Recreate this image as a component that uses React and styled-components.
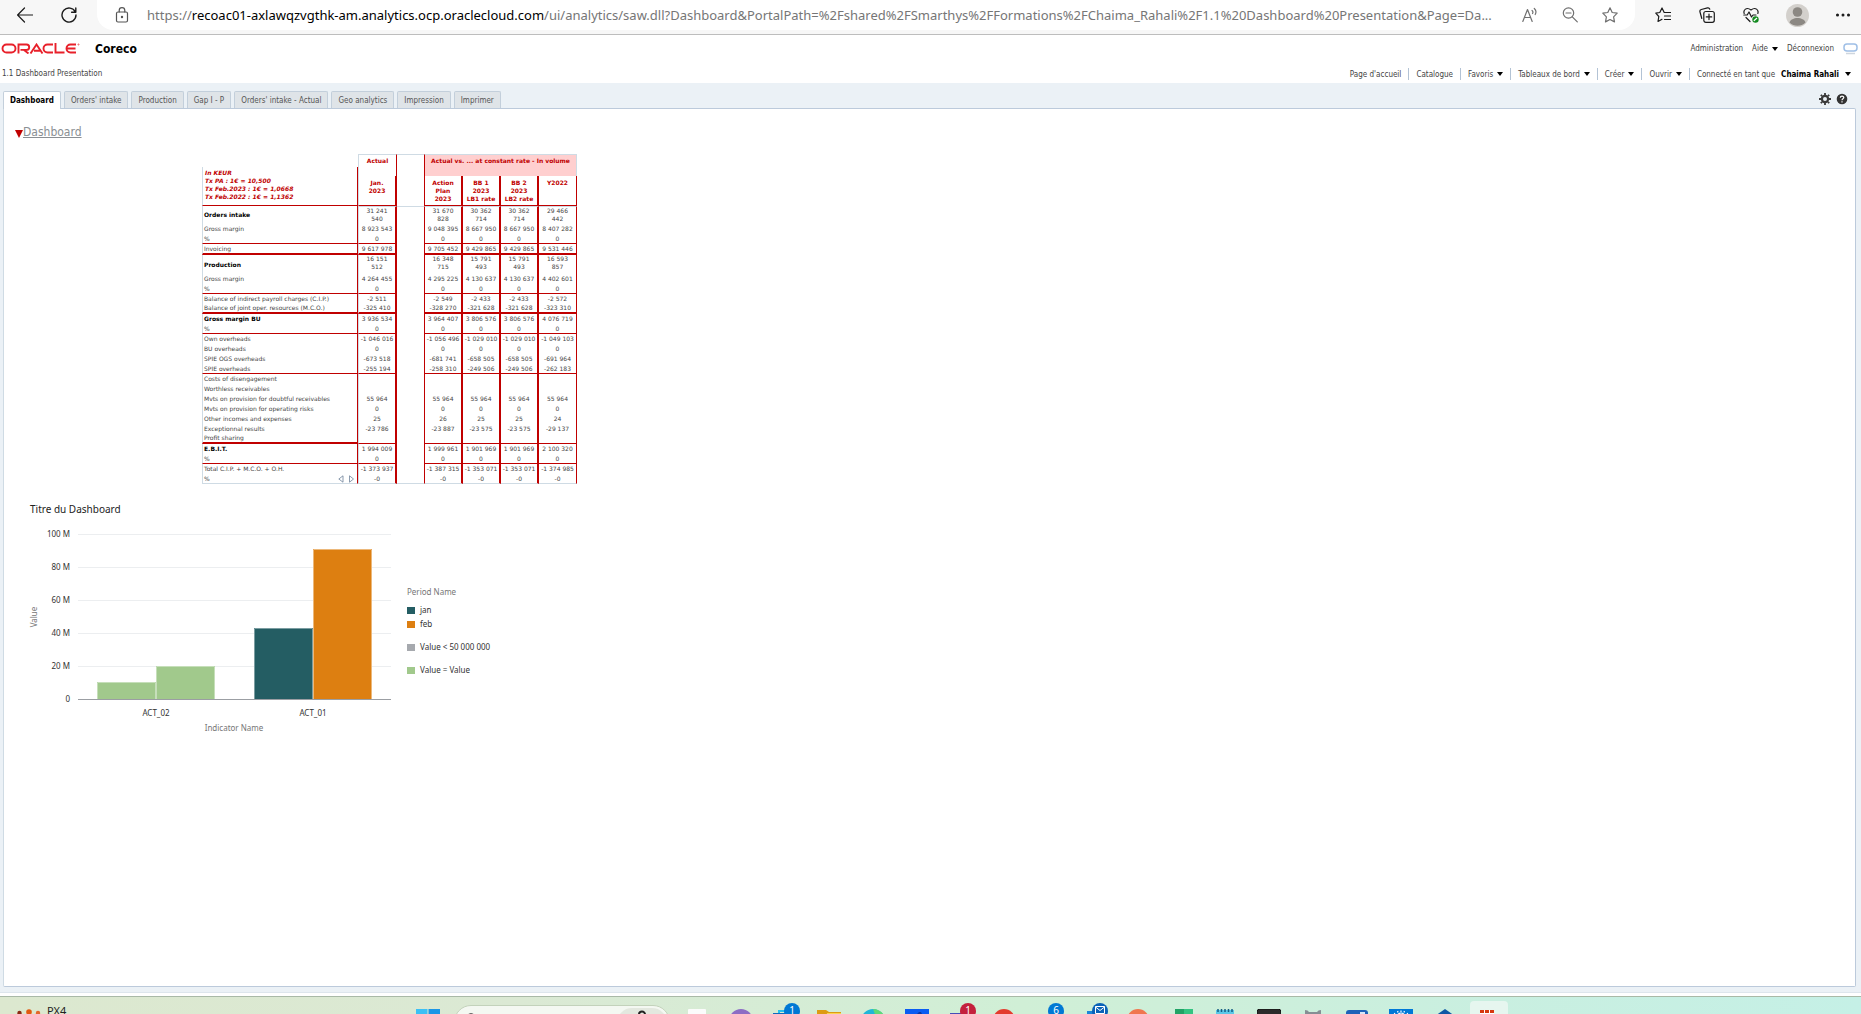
import React from 'react';
import styled, { createGlobalStyle, css } from 'styled-components';

const ui = '"Noto Sans", "Open Sans", sans-serif';
const narrow = '"DejaVu Sans Condensed", "DejaVu Sans", sans-serif';
const wide = '"DejaVu Sans", sans-serif';
const red = '#c00000';
const pale = '#cfdbe4';

const Global = createGlobalStyle`
  *, *::before, *::after { box-sizing: border-box; }
  body { margin: 0; background: #fff; color: #444; font-family: ${narrow}; font-size: 8px; }
  button { border: 0; padding: 0; background: none; color: inherit; font: inherit; cursor: pointer; }
  a { color: inherit; text-decoration: none; }
`;

const Page = styled.div`
  min-height: 100vh;
  display: flex;
  flex-direction: column;
  overflow: hidden;
`;

/* ---------- browser bar ---------- */
const Browser = styled.header`
  height: 35px;
  flex: none;
  display: flex;
  align-items: flex-start;
  background: #f7f7f7;
  border-bottom: 1px solid #bdbdbd;
`;
const IconButton = styled.button`
  width: ${(p) => p.$w || 44}px;
  height: 30px;
  flex: none;
  display: flex;
  align-items: center;
  justify-content: center;
  color: ${(p) => p.$color || '#1b1b1b'};
`;
const Leading = styled.div`
  display: flex;
  padding-left: 3px;
  width: 97px;
`;
const Address = styled.div`
  flex: 1;
  min-width: 0;
  height: 30px;
  display: flex;
  align-items: center;
  margin-right: 10px;
  padding-right: 5px;
  background: #fff;
  border-radius: 0 0 16px 16px;
`;
const Url = styled.div`
  flex: 1;
  min-width: 0;
  overflow: hidden;
  white-space: nowrap;
  font: 13px/20px ${ui};
  color: #767676;
  b { font-weight: 400; color: #000; }
`;

/* ---------- application header ---------- */
const AppHeader = styled.div`
  flex: none;
  height: 48px;
  display: flex;
  justify-content: space-between;
`;
const Brand = styled.div`
  display: flex;
  flex-direction: column;
`;
const BrandRow = styled.div`
  display: flex;
  align-items: center;
  gap: 15px;
  height: 27px;
  padding-left: 1px;
  font: bold 12px/16px ${narrow};
  color: #000;
`;
const PageName = styled.div`
  padding: 6px 0 0 2px;
  line-height: 12px;
`;
const Links = styled.div`
  display: flex;
  flex-direction: column;
  align-items: flex-end;
  gap: 3px;
`;
const LinkRow = styled.nav`
  display: flex;
  align-items: center;
  height: ${(p) => p.$h}px;
  padding-right: 3px;
  gap: ${(p) => p.$gap || 0}px;
`;
const MenuItem = styled.a`
  display: flex;
  align-items: center;
  gap: 4px;
  height: 12px;
  white-space: nowrap;
`;
const NavItem = styled(MenuItem)`
  padding: 0 7px;
  border-left: ${(p) => (p.$first ? 0 : 1)}px solid #b3c3d5;
  gap: ${(p) => (p.$user ? 6 : 4)}px;
  strong { color: #000; }
`;
const Caret = styled.i`
  border: 3px solid transparent;
  border-top: 4px solid #000;
  border-bottom: 0;
`;

/* ---------- tabs and panel ---------- */
const Workspace = styled.main`
  flex: 1;
  display: flex;
  flex-direction: column;
  padding: 8px 5px 5px 3px;
  background: #ebf1f6;
  border-bottom: 1px solid #dde5ec;
`;
const TabBar = styled.div`
  display: flex;
  align-items: flex-end;
  justify-content: space-between;
  height: 17px;
`;
const Tabs = styled.div`
  display: flex;
  gap: 3px;
`;
const Tab = styled.button`
  height: 17px;
  padding: 0 6px;
  border: 1px solid #c3cfdb;
  border-bottom: 0;
  border-radius: 2px 2px 0 0;
  background: #dfe4e8;
  color: #555;
  white-space: nowrap;
  ${(p) => p.$on && css`
    height: 18px;
    margin-bottom: -1px;
    position: relative;
    background: #fff;
    color: #000;
    font-weight: bold;
  `}
`;
const Tools = styled.div`
  display: flex;
  gap: 5px;
  padding: 0 8px 3px 0;
  button { display: flex; }
`;
const Panel = styled.section`
  flex: 1;
  background: #fff;
  border: 1px solid #bccadb;
  border-radius: 0 2px 2px 2px;
  border-left-color: ${pale};
  padding: 14px 11px;
`;
const SectionTitle = styled.h2`
  margin: 0;
  display: flex;
  align-items: center;
  font: 12px/18px ${narrow};
  color: #8a8f94;
  a { text-decoration: underline; }
`;
const Expand = styled.i`
  margin-top: 4px;
  border: 4px solid transparent;
  border-top: 8px solid ${red};
  border-bottom: 0;
`;

/* ---------- report table ---------- */
const Report = styled.table`
  width: 375px;
  margin: 13px 0 0 187px;
  table-layout: fixed;
  border-collapse: separate;
  border-spacing: 0;
  font: 6px/8px ${wide};
  color: #444;
  th, td { padding: 0; text-align: center; }
`;
const Row = styled.tr`
  height: ${(p) => p.$h || 10}px;
`;
const lineOf = { thin: `1px solid ${red}`, thick: `2px solid ${red}`, end: `1px solid ${pale}` };
const Label = styled.th`
  && { padding-left: 1px; text-align: left; }
  font: ${(p) => (p.$bold ? 'bold' : 'normal')} 6px/8px ${wide};
  color: ${(p) => (p.$bold ? '#000' : '#444')};
  border-left: 1px solid ${pale};
  border-right: 1px solid ${red};
  border-bottom: ${(p) => lineOf[p.$line] || 0};
  white-space: nowrap;
`;
const LabelInner = styled.div`
  display: flex;
  justify-content: space-between;
  align-items: center;
  padding-right: 3px;
`;
const Cell = styled.td`
  vertical-align: ${(p) => (p.$tall ? 'top' : 'middle')};
  border-top: ${(p) => (p.$first ? `1px solid ${pale}` : 0)};
  border-left: ${(p) => (p.$kind === 'actual' ? `1px solid ${pale}` : 0)};
  border-right: ${(p) => (p.$kind === 'last' || p.$kind === 'gap' ? 1 : 2)}px solid ${red};
  border-bottom: ${(p) => (p.$kind === 'gap' && p.$line !== 'end' ? 0 : lineOf[p.$line] || 0)};
`;
const Group = styled.th`
  color: ${red};
  vertical-align: top;
  border-top: 1px solid ${pale};
  border-left: ${(p) => (p.$plain ? `1px solid ${pale}` : 0)};
  border-right: 1px solid ${(p) => (p.$pink ? pale : red)};
  background: ${(p) => (p.$pink ? '#ffcfcf' : '#fff')};
  && { padding-top: 2px; }
`;
const Head = styled(Cell).attrs({ as: 'th' })`
  color: ${red};
  vertical-align: top;
  border-bottom: ${(p) => (p.$kind === 'gap' ? 0 : 1)}px solid ${red};
  && { padding-top: 3px; }
`;
const Corner = styled.th`
  vertical-align: bottom;
`;
const Rates = styled.div`
  height: 39px;
  padding: 2px;
  text-align: left;
  font: italic bold 6px/8px ${wide};
  color: ${red};
  border-left: 1px solid ${pale};
  border-right: 1px solid ${red};
  border-bottom: 1px solid ${red};
`;

const rows = [
  ['Orders intake', '31 241 540', '31 670 828', '30 362 714', '30 362 714', '29 466 442', { bold: 1, h: 18, tall: 1 }],
  ['Gross margin', '8 923 543', '9 048 395', '8 667 950', '8 667 950', '8 407 282', {}],
  ['%', '0', '0', '0', '0', '0', { line: 'thin' }],
  ['Invoicing', '9 617 978', '9 705 452', '9 429 865', '9 429 865', '9 531 446', { line: 'thick', h: 11 }],
  ['Production', '16 151 512', '16 348 715', '15 791 493', '15 791 493', '16 593 857', { bold: 1, h: 19, tall: 1 }],
  ['Gross margin', '4 264 455', '4 295 225', '4 130 637', '4 130 637', '4 402 601', {}],
  ['%', '0', '0', '0', '0', '0', { line: 'thin' }],
  ['Balance of indirect payroll charges (C.I.P.)', '-2 511', '-2 549', '-2 433', '-2 433', '-2 572', {}],
  ['Balance of joint oper. resources (M.C.O.)', '-325 410', '-328 270', '-321 628', '-321 628', '-323 310', { line: 'thick' }],
  ['Gross margin BU', '3 936 534', '3 964 407', '3 806 576', '3 806 576', '4 076 719', { bold: 1 }],
  ['%', '0', '0', '0', '0', '0', { line: 'thin' }],
  ['Own overheads', '-1 046 016', '-1 056 496', '-1 029 010', '-1 029 010', '-1 049 103', {}],
  ['BU overheads', '0', '0', '0', '0', '0', {}],
  ['SPIE OGS overheads', '-673 518', '-681 741', '-658 505', '-658 505', '-691 964', {}],
  ['SPIE overheads', '-255 194', '-258 310', '-249 506', '-249 506', '-262 183', { line: 'thin' }],
  ['Costs of disengagement', '', '', '', '', '', {}],
  ['Worthless receivables', '', '', '', '', '', {}],
  ['Mvts on provision for doubtful receivables', '55 964', '55 964', '55 964', '55 964', '55 964', {}],
  ['Mvts on provision for operating risks', '0', '0', '0', '0', '0', {}],
  ['Other incomes and expenses', '25', '26', '25', '25', '24', {}],
  ['Exceptionnal results', '-23 786', '-23 887', '-23 575', '-23 575', '-29 137', {}],
  ['Profit sharing', '', '', '', '', '', { line: 'thin', labelLine: 'thick' }],
  ['E.B.I.T.', '1 994 009', '1 999 961', '1 901 969', '1 901 969', '2 100 320', { bold: 1 }],
  ['%', '0', '0', '0', '0', '0', { line: 'thin' }],
  ['Total C.I.P. + M.C.O. + O.H.', '-1 373 937', '-1 387 315', '-1 353 071', '-1 353 071', '-1 374 985', {}],
  ['%', '-0', '-0', '-0', '-0', '-0', { line: 'end', arrows: 1 }],
];

/* Seven-digit values stay on one line; eight-digit ones break before the last group. */
const Value = ({ text }) => {
  if (text.length < 10 || text[0] === '-') return <>{text.replace(/ /g, '\u00a0')}</>;
  return <>{text.slice(0, 6)}<br />{text.slice(7)}</>;
};
const Nowrap = styled.span`
  display: flex;
  justify-content: center;
  white-space: nowrap;
`;
const Col = styled.col`
  width: ${(p) => p.$w}px;
`;

const ReportTable = () => (
  <Report>
    <colgroup>
      {[156, 39, 28, 38, 38, 38, 38].map((w, i) => <Col key={i} $w={w} />)}
    </colgroup>
    <thead>
      <Row $h={22}>
        <Corner rowSpan={2}>
          <Rates>In KEUR<br />Tx PA : 1€ = 10,500<br />Tx Feb.2023 : 1€ = 1,0668<br />Tx Feb.2022 : 1€ = 1,1362</Rates>
        </Corner>
        <Group $plain>Actual</Group>
        <Group />
        <Group colSpan={4} $pink>Actual vs. ... at constant rate - In volume</Group>
      </Row>
      <Row $h={30}>
        <Head $kind="actual">Jan.<br />2023</Head>
        <Head $kind="gap" />
        <Head>Action<br />Plan<br />2023</Head>
        <Head>BB 1<br />2023<br />LB1 rate</Head>
        <Head>BB 2<br />2023<br />LB2 rate</Head>
        <Head $kind="last">Y2022</Head>
      </Row>
    </thead>
    <tbody>
      {rows.map((r, i) => {
        const o = r[6];
        const shared = { $line: o.line, $first: i === 0, $tall: o.tall };
        return (
          <Row key={i} $h={o.h}>
            <Label scope="row" $bold={o.bold} $line={o.labelLine || o.line}>
              <LabelInner>
                {r[0]}
                {o.arrows && (
                  <svg width="16" height="8" viewBox="0 0 16 8" fill="none" stroke="#6d8299" strokeWidth=".8">
                    <path d="M5 .8v6.400L.8 4zM11.500 .8v6.400L15.500 4z" />
                  </svg>
                )}
              </LabelInner>
            </Label>
            <Cell $kind="actual" {...shared}><Nowrap><span><Value text={r[1]} /></span></Nowrap></Cell>
            <Cell $kind="gap" {...shared} />
            {[2, 3, 4, 5].map((c) => (
              <Cell key={c} $kind={c === 5 ? 'last' : 'num'} {...shared}>
                <Nowrap><span><Value text={r[c]} /></span></Nowrap>
              </Cell>
            ))}
          </Row>
        );
      })}
    </tbody>
  </Report>
);

/* ---------- chart ---------- */
const ChartBlock = styled.figure`
  margin: 16px 0 0 15px;
  font: 8px/14px ${ui};
  color: #333;
`;
const ChartTitle = styled.figcaption`
  font: 10px/18px ${ui};
  color: #222;
`;
const ChartRow = styled.div`
  display: flex;
  align-items: flex-start;
`;
const Plot = styled.svg`
  display: block;
  overflow: visible;
  font: 8px ${ui};
  fill: #333;
`;
const Legend = styled.ul`
  list-style: none;
  margin: 0;
  padding: 67px 0 0 14px;
`;
const LegendItem = styled.li`
  display: flex;
  align-items: center;
  gap: 5px;
  height: 14px;
  margin-top: ${(p) => p.$gap || 0}px;
  white-space: nowrap;
  color: ${(p) => (p.$title ? '#767676' : '#333')};
`;
const Swatch = styled.i`
  width: 8px;
  height: 7px;
  background: ${(p) => p.$c};
`;

const bars = [
  [67, 10, '#a1c98c', '#c6dfba'],
  [126, 20, '#a1c98c', '#c6dfba'],
  [224, 43, '#245d63', '#7b9da1'],
  [283, 91, '#dd7f11', '#ecb87a'],
];

const Chart = () => (
  <ChartBlock>
    <ChartTitle>Titre du Dashboard</ChartTitle>
    <ChartRow>
      <Plot width="363" height="216" viewBox="0 0 363 216" role="img" aria-label="Value by Indicator Name">
        {[0, 1, 2, 3, 4, 5].map((n) => (
          <g key={n}>
            <line x1="48" x2="361" y1={181.500 - n * 33} y2={181.500 - n * 33} stroke="#eceef0" />
            <text x="40" y={184 - n * 33} textAnchor="end">{n ? `${n * 20} M` : '0'}</text>
          </g>
        ))}
        {bars.map(([x, v, c, edge]) => (
          <g key={x}>
            <rect x={x} y={181 - Math.round(v * 1.650)} width="59" height={Math.round(v * 1.650)} fill={c} />
            <path d={`M${x + 0.5} 181V${181.500 - Math.round(v * 1.650)}h58V181`} fill="none" stroke={edge} />
          </g>
        ))}
        <line x1="48" x2="361" y1="181.500" y2="181.500" stroke="#9b9ea3" />
        <text x="126" y="198" textAnchor="middle">ACT_02</text>
        <text x="283" y="198" textAnchor="middle">ACT_01</text>
        <text x="204" y="213" textAnchor="middle" fill="#767676">Indicator Name</text>
        <text transform="translate(7 99) rotate(-90)" textAnchor="middle" fill="#767676">Value</text>
      </Plot>
      <Legend>
        <LegendItem $title>Period Name</LegendItem>
        <LegendItem $gap={4}><Swatch $c="#245d63" />jan</LegendItem>
        <LegendItem><Swatch $c="#dd7f11" />feb</LegendItem>
        <LegendItem $gap={9}><Swatch $c="#a6a9ae" />Value &lt; 50 000 000</LegendItem>
        <LegendItem $gap={9}><Swatch $c="#a1c98c" />Value = Value</LegendItem>
      </Legend>
    </ChartRow>
  </ChartBlock>
);

/* ---------- taskbar ---------- */
const Taskbar = styled.footer`
  flex: none;
  display: flex;
  align-items: flex-start;
  height: 18px;
  margin-top: 3px;
  overflow: hidden;
  border-top: 1px solid #a9b9a7;
  background: linear-gradient(90deg, #dce8cf 0%, #dbe9d4 28%, #d0efd6 55%, #c9efe0 80%, #c5f0e6 100%);
`;
const Widget = styled.button`
  display: flex;
  align-items: flex-start;
  gap: 6px;
  width: 406px;
  padding: 6px 0 0 17px;
  font: 11px/16px ${ui};
  color: #222;
`;
const Search = styled.label`
  display: flex;
  align-items: flex-start;
  justify-content: space-between;
  width: 216px;
  height: 34px;
  flex: none;
  margin: 8px 5px 0 4px;
  padding: 2px 2px 0 11px;
  border-radius: 17px;
  border: 1px solid #c3d2bb;
  background: #f4f8f2;
  input { flex: 1; min-width: 0; border: 0; background: none; height: 30px; }
`;
const SearchArt = styled.span`
  width: 50px;
  height: 30px;
  border-radius: 15px;
  background: #e3e8df;
  display: flex;
  justify-content: center;
`;
const Task = styled.button`
  position: relative;
  flex: none;
  width: 44px;
  height: 36px;
  display: flex;
  justify-content: center;
  padding-top: 12px;
`;
const Tile = styled(Task)`
  width: 38px;
  margin: 4px 3px 0;
  padding-top: 8px;
  border-radius: 4px;
  background: #e6f6ef;
`;
const Badge = styled.span`
  position: absolute;
  top: 6px;
  left: 21px;
  width: 16px;
  height: 16px;
  border-radius: 8px;
  background: ${(p) => p.$c || '#0078d4'};
  color: #fff;
  font: 10px/14px ${ui};
  text-align: center;
`;

const Art = ({ children }) => (
  <svg width="24" height="24" viewBox="0 0 24 24" fill="none">{children}</svg>
);

const tasks = [
  { name: 'Task view', art: <rect x="3" width="18" height="18" rx="1" fill="#fbfbfb" /> },
  { name: 'Chat', art: <circle cx="12" cy="12" r="12" fill="#8d6cc4" /> },
  { name: 'Mail', art: <><path d="M6 2h8v6H6z" stroke="#28c0ee" strokeWidth="2" /><path d="M0 4h12v14H0z" fill="#0f6cbd" /></>, badge: '1' },
  { name: 'Files', art: <><path d="M0 1h9l3 2h12v20H0z" fill="#dd9b13" /><path d="M10 4h14v18H8z" fill="#fbd34e" /></> },
  { name: 'Edge', art: <><circle cx="12" cy="12" r="12" fill="#20b6d8" /><path d="M12 0c6 0 11 4 12 9l-9-1z" fill="#5fd977" /></> },
  { name: 'Store', art: <><rect width="24" height="24" fill="#0a5cf2" /><path d="M9 5h3l2-2h2l1 2h2v8H9z" fill="#0838a8" /></> },
  { name: 'Teams', art: <><circle cx="16" cy="6" r="5" fill="#7b83eb" /><path d="M1 4h14v14H1z" fill="#464eb8" /></>, badge: '1', color: '#c4203c' },
  { name: 'Chrome', art: <circle cx="11" cy="11" r="11" fill="#e33b2e" /> },
  { name: 'Phone', art: null, badge: '6' },
  { name: 'Outlook', art: <><path d="M6 2h12v6H6z" fill="#1a86d9" /><path d="M0 5h14v14H0z" fill="#0a5cad" /></>, badge: 'mail', color: '#0a62b8' },
  { name: 'PowerPoint', art: <><circle cx="13" cy="11" r="11" fill="#f0764f" /><path d="M1 5h11v12H1z" fill="#c0411d" /></> },
  { name: 'Excel', art: <><path d="M6 0h9v20H6z" fill="#21a366" /><path d="M15 0h9v20h-9z" fill="#33c481" /><path d="M0 5h12v12H0z" fill="#107c41" /></> },
  { name: 'Notepad', art: <><rect x="3" y="1" width="18" height="20" fill="#5ac8e8" /><path d="M5 0v3M8.500 0v3M12 0v3M15.500 0v3M19 0v3" stroke="#155e83" strokeWidth="1.500" /></> },
  { name: 'Terminal', art: <rect y="0" width="24" height="22" rx="3" fill="#2b2b2b" stroke="#111" /> },
  { name: 'Tools', art: <path d="M4 1q3 0 4 2h8q1-2 4-2v6l-2 4H6L4 7z" fill="#868e94" /> },
  { name: 'Paint', art: <><rect x="1" y="1" width="22" height="22" rx="3" fill="#1d62b8" /><path d="M15 3h5v5h-5z" fill="#d5e6f8" /></> },
  { name: 'Settings', art: <><rect width="24" height="24" fill="#0078d7" /><path d="M6 5l-.8-1M9 3.500L8.600 2M12 3V1.500M15 3.500l.4-1.500M18 5l.8-1M8 8a4 4 0 018 0" stroke="#fff" strokeWidth="1.200" /></> },
  { name: 'Virtual box', art: <path d="M12 0l10 7v10H2V7z" fill="#0f57a5" /> },
];

const IconSvg = ({ children, size = 16, sw = 1.2 }) => (
  <svg width={size} height={size} viewBox="0 0 16 16" fill="none" stroke="currentColor" strokeWidth={sw} strokeLinecap="round" strokeLinejoin="round">
    {children}
  </svg>
);
const STAR = 'M8 .8l2.200 4.700 5 .7-3.600 3.600.9 5.100L8 12.500l-4.500 2.400.9-5.100L.8 6.200l5-.7z';

export default function App() {
  return (
    <Page>
      <Global />
      <Browser>
        <Leading>
          <IconButton aria-label="Back"><IconSvg><path d="M15.500 8H.8M7.500 1L.6 8l6.900 7" /></IconSvg></IconButton>
          <IconButton aria-label="Refresh"><IconSvg sw={1.4}><path d="M14.300 5A7 7 0 1015 8M14.800 1v4.200h-4.200" /></IconSvg></IconButton>
        </Leading>
        <Address>
          <IconButton $w={50} $color="#555" aria-label="Site information">
            <IconSvg><rect x="2.500" y="5" width="11" height="10" rx="1.500" /><path d="M5.200 5V3.500a2.800 2.800 0 015.600 0V5" /><circle cx="8" cy="10" r=".6" fill="currentColor" /></IconSvg>
          </IconButton>
          <Url>
            https://<b>recoac01-axlawqzvgthk-am.analytics.ocp.oraclecloud.com</b>/ui/analytics/saw.dll?Dashboard&amp;PortalPath=%2Fshared%2FSmarthys%2FFormations%2FChaima_Rahali%2F1.1%20Dashboard%20Presentation&amp;Page=Da...
          </Url>
          <IconButton $w={40} $color="#707070" aria-label="Read aloud"><IconSvg><path d="M.8 14.500L5.500 2.500l4.700 12M2.500 10.500h6M10 3.500c1 .8 1 2.200.5 3M12.300 1.500c2 1.800 2 4 .9 6" /></IconSvg></IconButton>
          <IconButton $w={40} $color="#707070" aria-label="Zoom out"><IconSvg><circle cx="6.500" cy="6" r="5.200" /><path d="M4 6h5M10.300 9.800l5 5" /></IconSvg></IconButton>
          <IconButton $w={40} $color="#707070" aria-label="Add to favourites"><IconSvg><path d={STAR} /></IconSvg></IconButton>
        </Address>
        <IconButton $w={36} aria-label="Favourites"><IconSvg><path d="M10.500 5.500H9.200L7 1 4.800 5.500.8 6.200l3 3.300-.8 5L7 12.300M10.500 5.500h5M9.500 9h6M9.500 12.500h6" /></IconSvg></IconButton>
        <IconButton $w={52} aria-label="Collections"><IconSvg><rect x="4.800" y="4.500" width="10.500" height="10.800" rx="2" /><path d="M10 7.200v5.400M7.300 9.900h5.400M2.800 11.500L1 5a2 2 0 011.300-2.500L8.500.9a2 2 0 012.300 1.300" /></IconSvg></IconButton>
        <IconButton $w={36} aria-label="Performance">
          <IconSvg><path d="M1.200 6.500C0 3 3.500-.5 8 3c4.500-3.500 8 0 6.800 3.500M.8 8h3.400L6 5l2.500 5L10 8h3M3 10.500l4 4" /><circle cx="12.500" cy="12.500" r="3.200" fill="#138a1f" stroke="none" /><path d="M11.200 13.500l2.500-2.200" stroke="#fff" /></IconSvg>
        </IconButton>
        <IconButton $w={56} aria-label="Profile">
          <svg width="23" height="23" viewBox="0 0 23 23"><circle cx="11.500" cy="11.500" r="11.500" fill="#d3d0cc" /><circle cx="11.500" cy="8" r="4.800" fill="#8c8883" /><path d="M3.500 18.500c1.500-6 14.500-6 16 0a11.500 11.500 0 01-16 0z" fill="#8c8883" /></svg>
        </IconButton>
        <IconButton $w={36} aria-label="More"><IconSvg><circle cx="2.500" cy="8" r=".9" fill="currentColor" /><circle cx="8" cy="8" r=".9" fill="currentColor" /><circle cx="13.500" cy="8" r=".9" fill="currentColor" /></IconSvg></IconButton>
      </Browser>

      <AppHeader>
        <Brand>
          <BrandRow>
            <svg width="79" height="11" viewBox="0 0 79 11" fill="none" stroke="#e8202a" strokeWidth="1.900" role="img" aria-label="Oracle">
              <path d="M5.500 1.500h5a4 4 0 010 8h-5a4 4 0 010-8z" />
              <path d="M17.500 10.500v-9h8a2.700 2.700 0 010 5.400h-6M23 7l4.500 3.500" />
              <path d="M29.500 10.500L35.500 1.500l6 9M33 7.800h6" />
              <path d="M52 1.500h-5.500a4 4 0 000 8H52" />
              <path d="M54.500 0v9.500h9" />
              <path d="M75 1.500h-5.500a4 4 0 000 8H75M66.500 5.500h8" />
              <circle cx="77.500" cy="1.500" r=".6" strokeWidth=".6" />
            </svg>
            Coreco
          </BrandRow>
          <PageName>1.1 Dashboard Presentation</PageName>
        </Brand>
        <Links>
          <LinkRow $h={27} $gap={9}>
            <MenuItem href="#admin">Administration</MenuItem>
            <MenuItem href="#help">Aide <Caret /></MenuItem>
            <MenuItem href="#logout">Déconnexion</MenuItem>
            <svg width="15" height="12" viewBox="0 0 15 12" fill="none"><rect x="1" y="1" width="13" height="7" rx="3" stroke="#9fbfe6" strokeWidth="1.500" /><path d="M3 10.500h9" stroke="#cfd6de" strokeWidth="1.500" /></svg>
          </LinkRow>
          <LinkRow $h={18}>
            <NavItem $first href="#home">Page d'accueil</NavItem>
            <NavItem href="#catalog">Catalogue</NavItem>
            <NavItem href="#fav">Favoris <Caret /></NavItem>
            <NavItem href="#boards">Tableaux de bord <Caret /></NavItem>
            <NavItem href="#new">Créer <Caret /></NavItem>
            <NavItem href="#open">Ouvrir <Caret /></NavItem>
            <NavItem $user href="#user">Connecté en tant que <strong>Chaima Rahali</strong> <Caret /></NavItem>
          </LinkRow>
        </Links>
      </AppHeader>

      <Workspace>
        <TabBar>
          <Tabs>
            <Tab $on>Dashboard</Tab>
            {["Orders' intake", 'Production', 'Gap I - P', "Orders' intake - Actual", 'Geo analytics', 'Impression', 'Imprimer'].map((t) => (
              <Tab key={t}>{t}</Tab>
            ))}
          </Tabs>
          <Tools>
            <button aria-label="Page options">
              <svg width="12" height="12" viewBox="0 0 12 12" fill="none" stroke="#3a3a3a"><circle cx="6" cy="6" r="3.100" strokeWidth="2.200" /><path d="M6 0v2M6 10v2M0 6h2M10 6h2M1.800 1.800l1.400 1.400M8.800 8.800l1.400 1.400M10.200 1.800L8.800 3.200M3.200 8.800l-1.400 1.400" strokeWidth="1.800" /></svg>
            </button>
            <button aria-label="Help">
              <svg width="12" height="12" viewBox="0 0 12 12" fill="none"><circle cx="6" cy="6" r="5.300" fill="#333" /><path d="M4.300 4.800c0-2.300 3.500-2.200 3.500-.2C7.800 5.800 6 5.800 6 7.200M6 8.300v1.200" stroke="#fff" strokeWidth="1.200" /></svg>
            </button>
          </Tools>
        </TabBar>
        <Panel>
          <SectionTitle><Expand /><a href="#dashboard">Dashboard</a></SectionTitle>
          <ReportTable />
          <Chart />
        </Panel>
      </Workspace>

      <Taskbar>
        <Widget>
          <svg width="24" height="14" viewBox="0 0 24 14"><circle cx="2.500" cy="10" r="2.200" fill="#8a2a12" /><circle cx="12" cy="9" r="2.800" fill="#e2590f" /><circle cx="21" cy="10" r="2.200" fill="#e2672a" /></svg>
          PX4
        </Widget>
        <Task aria-label="Start">
          <Art><path d="M0 0h11.500v11.500H0z" fill="#3cc0f5" /><path d="M12.500 0H24v11.500H12.500z" fill="#1b96e6" /></Art>
        </Task>
        <Search aria-label="Search">
          <svg width="12" height="14" viewBox="0 0 12 14" fill="none" stroke="#333" strokeWidth="1.500"><circle cx="5" cy="10" r="4" /></svg>
          <input type="text" aria-label="Search" />
          <SearchArt>
            <svg width="22" height="16" viewBox="0 0 22 16" fill="none"><path d="M8 9V6.500a3 3 0 016 0V9" stroke="#222" strokeWidth="2" /><path d="M4 7h14v8H4z" fill="#d9b98a" /><path d="M8 6h6v4H8z" fill="#222" /></svg>
          </SearchArt>
        </Search>
        {tasks.map((t) => (
          <Task key={t.name} aria-label={t.name}>
            <Art>{t.art}</Art>
            {t.badge && (
              <Badge $c={t.color}>
                {t.badge === 'mail' ? <svg width="10" height="8" viewBox="0 0 10 8" fill="none" stroke="#fff"><path d="M.5 .5h9v7h-9zM.5 1L5 4.500 9.500 1" /></svg> : t.badge}
              </Badge>
            )}
          </Task>
        ))}
        <Tile aria-label="Snipping">
          <Art><path d="M3 1h14v12H3z" fill="#fff" /><path d="M3 1h4v3H3zM8 1h4v3H8zM13 1h4v3h-4zM3 5h9v3H3z" fill="#d6380f" /></Art>
        </Tile>
      </Taskbar>
    </Page>
  );
}
